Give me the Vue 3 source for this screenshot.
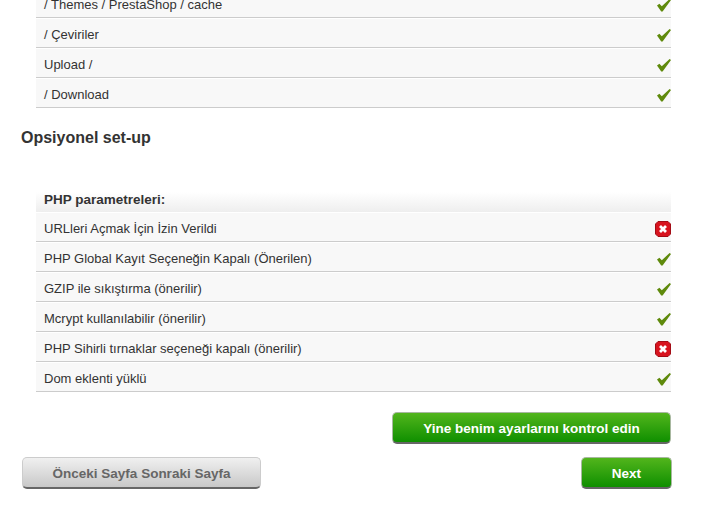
<script setup>
const folders = ['/ Themes / PrestaShop / cache', '/ Çeviriler', 'Upload /', '/ Download']

const params = [
  { label: 'URLleri Açmak İçin İzin Verildi', ok: false },
  { label: 'PHP Global Kayıt Seçeneğin Kapalı (Önerilen)', ok: true },
  { label: 'GZIP ile sıkıştırma (önerilir)', ok: true },
  { label: 'Mcrypt kullanılabilir (önerilir)', ok: true },
  { label: 'PHP Sihirli tırnaklar seçeneği kapalı (önerilir)', ok: false },
  { label: 'Dom eklenti yüklü', ok: true }
]
</script>

<template>
  <div class="page">
    <ul class="list first">
      <li v-for="f in folders" :key="f" class="row">
        <span class="label">{{ f }}</span>
        <svg class="check" width="14" height="13" viewBox="0 0 14 13">
          <path d="M0 6.6 L2.4 4.8 L4.8 7.2 L12.6 0 L14 1 L5.6 12.6 L4.2 12.6 Z" fill="#5f8a0c" />
        </svg>
      </li>
    </ul>

    <h2 class="title">Opsiyonel set-up</h2>

    <div class="head">PHP parametreleri:</div>
    <ul class="list">
      <li v-for="p in params" :key="p.label" class="row">
        <span class="label">{{ p.label }}</span>
        <svg v-if="p.ok" class="check" width="14" height="13" viewBox="0 0 14 13">
          <path d="M0 6.6 L2.4 4.8 L4.8 7.2 L12.6 0 L14 1 L5.6 12.6 L4.2 12.6 Z" fill="#5f8a0c" />
        </svg>
        <svg v-else class="cross" width="16" height="16" viewBox="0 0 16 16">
          <path d="M3 0.5 H13 L15.5 3 V13 L13 15.5 H3 L0.5 13 V3 Z" fill="#d8141f" stroke="#a30d16" />
          <path d="M5 5 L11 11 M11 5 L5 11" stroke="#fff" stroke-width="2.8" />
        </svg>
      </li>
    </ul>

    <div class="again">
      <button class="btn green wide">Yine benim ayarlarını kontrol edin</button>
    </div>
    <div class="nav">
      <button class="btn grey">Önceki Sayfa Sonraki Sayfa</button>
      <button class="btn green next">Next</button>
    </div>
  </div>
</template>

<style>
html, body {
  overflow: hidden;
  background: #fff;
}
</style>

<style scoped>
.page {
  width: 712px;
  height: 512px;
  overflow: hidden;
  font-family: "Liberation Sans", Arial, sans-serif;
  font-size: 13px;
  color: #333;
}

.list {
  list-style: none;
  margin: 0 41px 0 36px;
  padding: 0;
}

.first {
  margin-top: -12px;
}

.row {
  display: flex;
  align-items: center;
  justify-content: space-between;
  height: 24px;
  padding: 4px 0 0 8px;
  background: #f8f8f8;
  border-top: 1px solid #fff;
  border-bottom: 1px solid #ccc;
}

.label {
  margin-top: -2px;
}

.title {
  margin: 20px 0 0 21px;
  height: 64px;
  font-size: 16px;
  line-height: 20px;
  font-weight: bold;
  color: #333;
}

.head {
  margin: 0 41px 0 36px;
  height: 20px;
  line-height: 16px;
  padding-left: 8px;
  font-size: 13.5px;
  font-weight: bold;
  background: linear-gradient(#fff, #eee);
}

.btn {
  display: block;
  font-family: inherit;
  font-weight: bold;
  font-size: 13.5px;
  border-radius: 5px;
  cursor: pointer;
  padding: 2px 0 0;
}

.green {
  color: #fff;
  background: linear-gradient(#52b51c, #0f8f00);
  border: 1px solid #a8b8a0;
  border-bottom: 2px solid #666;
}

.grey {
  color: #666;
  width: 239px;
  height: 32px;
  background: linear-gradient(#f0f0f0, #c8c8c8);
  border: 1px solid #ccc;
  border-bottom: 2px solid #666;
}

.again {
  display: flex;
  justify-content: flex-end;
  margin: 20px 41px 0 0;
}

.wide {
  width: 279px;
  height: 32px;
}

.nav {
  display: flex;
  justify-content: space-between;
  margin: 13px 40px 0 22px;
}

.next {
  width: 91px;
  height: 32px;
}
</style>
